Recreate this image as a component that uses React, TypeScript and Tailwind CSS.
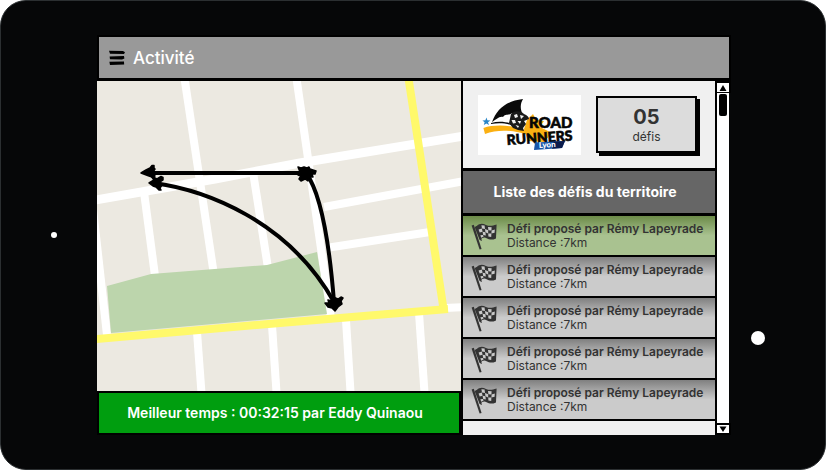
const challenges = [
  { id: 1, author: "Rémy Lapeyrade", distance: "7km", active: true },
  { id: 2, author: "Rémy Lapeyrade", distance: "7km", active: false },
  { id: 3, author: "Rémy Lapeyrade", distance: "7km", active: false },
  { id: 4, author: "Rémy Lapeyrade", distance: "7km", active: false },
  { id: 5, author: "Rémy Lapeyrade", distance: "7km", active: false },
];

function MenuIcon() {
  return (
    <svg className="h-4 w-4" viewBox="0 0 16 16" fill="#000" aria-hidden="true">
      <path d="M0 .8 L14 1 L16 2.2 L15 4 L1 3.8 Z" />
      <path d="M.6 6.4 L15 6 L15.4 8.6 L13 9.4 L1 9.2 Z" />
      <path d="M.4 11.8 L15 11.6 L15.2 14.6 L1 15 Z" />
    </svg>
  );
}

function FlagIcon() {
  return (
    <svg className="h-7 w-7 shrink-0" viewBox="0 0 28 28" aria-hidden="true">
      <path d="M.6 3.6 L2.8 2.8 L10.6 27 L8.6 27.6 Z" fill="#333" />
      <path d="M3.6 5 L6.2 3.8 L11 19 L8.6 18 Z" fill="#333" />
      <path
        d="M5.4 4.4 C9 .8 12 1.6 15 3 C18.4 4.4 21 4 25.6 2.6 L25 16.4 C21 18.4 18 17.6 15.6 16.2 C13 14.8 11 16 9.6 17.6 Z"
        fill="#333"
      />
      <g fill="#c9c9c9">
        <path d="M10.4 3.2 L13.6 3.6 L14 7 L11 6.4 Z" />
        <path d="M17 5 L20.6 5.2 L20.4 8.4 L17.4 8.2 Z" />
        <path d="M7.6 7.6 L10.8 6.6 L11.6 9.8 L8.6 10.6 Z" />
        <path d="M14 7 L17.2 8.2 L17.2 11.4 L14.4 10.2 Z" />
        <path d="M20.6 8.4 L23.8 7.6 L23.6 10.8 L20.4 11.6 Z" />
        <path d="M11.6 9.8 L14.4 10.2 L14.8 13.4 L12.2 13 Z" />
        <path d="M17.2 11.4 L20.4 11.6 L20.2 15 L17.4 14.6 Z" />
        <path d="M9.4 13.2 L12 13 L12.6 14.4 L10.2 15.8 Z" />
      </g>
    </svg>
  );
}

function ClubLogo() {
  return (
    <svg className="h-[60px] w-[103px] bg-white" viewBox="0 0 103 60" role="img" aria-label="Road Runners Lyon">
      <path d="M5.4 33 C14 30 26 30 38 32 L50 36 L50 40 C36 35 20 34 7 39 Z" fill="#fbb012" />
      <path d="M49 25 L55 19 L58 25 L66 26 L62 32 L74 38 L66 47 L50 46 L46 34 Z" fill="#fbb012" />
      <path d="M8.4 22.4 L9.4 25.2 L12.4 25.4 L10 27.2 L11 30 L8.4 28.4 L5.8 30 L6.6 27.2 L4.4 25.4 L7.4 25.2 Z" fill="#2a86c8" />
      <path d="M14 27 C19 14 28 6 45 4 C42 9 42 14 45 20 C41 17 37 19 34 18 C31 21 28 18 25 22 C21 21 18 25 14 27 Z" fill="#0a0a0a" />
      <path d="M13 28 C20 26 27 26.500 33 28.500 L33 30 C26 28 20 28 13 29 Z" fill="#0a0a0a" />
      <path d="M33 19 C37 15 43 16 46 19 C49 20 51 22 51 24 L46 26 L48 29 L45 33 L46 36 L40 35 L35 33 L31 28 Z" fill="#1a1a1a" />
      <path d="M36 20 L39 19 L40 22 L37 23 Z M42 20 L46 21 L43 24 Z M33.500 25 L37 25 L38 28 L35 28.500 Z M39.500 26 L43 26 L42 29 Z M37.500 30 L41 31 L40 33 Z" fill="#f1f1f1" />
      <g fontFamily="Lato, 'Liberation Sans', sans-serif" fontWeight="900" fill="#050505" stroke="#050505" strokeWidth=".6">
        <text x="51" y="33" fontSize="15">ROAD</text>
        <text x="29" y="50" fontSize="14" transform="rotate(-4 29 50)">RUNNERS</text>
      </g>
      <path d="M57 47.500 L87 46 L84 53 L56 55 Z" fill="#1a57a8" />
      <path d="M76 46.500 L87 46 L84 53 L74 53.700 Z" fill="#0b1c4c" />
      <text x="61" y="53" fontSize="8" fontWeight="900" fontFamily="Lato, 'Liberation Sans', sans-serif" fill="#fff" transform="rotate(-3 61 53)">Lyon</text>
    </svg>
  );
}

function RouteMap() {
  return (
    <svg
      className="block h-full min-h-[310px] w-full"
      viewBox="97 81 364 310"
      preserveAspectRatio="xMidYMid slice"
      role="img"
      aria-label="Carte du parcours"
    >
      <rect x="-403" y="-419" width="1364" height="1310" fill="#ece9e1" />
      <g stroke="#fff" strokeWidth="8" fill="none">
        <path d="M184 75 L214 275" />
        <path d="M296 75 L331 318" />
        <path d="M144 192 L155 276" />
        <path d="M253 172 L268 268" />
        <path d="M92 200 L107 335" />
        <path d="M197 332 L202 400" />
        <path d="M272 325 L277 400" />
        <path d="M346 320 L351 400" />
        <path d="M419 313 L425 400" />
        <path d="M90 201 L215 179 L300 163 L470 135" strokeWidth="9" />
        <path d="M324 207 L470 180" />
        <path d="M326 248 L430 232" />
        <path d="M445 308 L470 307" />
      </g>
      <path d="M107 286 L151 274 L267 265 L317 252 L327 314 L111 333 Z" fill="#bcd5ac" />
      <g stroke="#fff96b" strokeWidth="8" fill="none">
        <path d="M408 75 L444 312" />
        <path d="M90 339.500 L280 323 L448 309" />
      </g>
      <g stroke="#000" strokeWidth="4" fill="none">
        <path d="M146 173 L306 173" />
        <path d="M306 173 Q326 200 334 302" />
        <path d="M154 183 C205 190 288 220 334 302" />
      </g>
      <g fill="#000" stroke="#000" strokeWidth="1.500" strokeLinejoin="round">
        <path d="M141 173 L146 170 L150 168 L152 165.500 L154 165.500 L154 168 L155 169 L153 172 L155 176 L152 177 L149 176 Z" />
        <path d="M149 183 L154 180 L151 176 L157 179 L161 176.500 L163 177.500 L163 180 L160 182 L162 185 L160 188 L161 190 L159 190 L156 187 L153 186 Z" />
        <path d="M298 167 L301 168 L304 167 L307 168 L309 167 L310 169 L313 170 L316 171 L315 174 L312 174 L313 177 L310 177 L308 181 L305 179 L301 181 L299 179 L301 176 L298 175 L300 172 Z" />
        <path d="M335 311 L332 308 L328 307 L325 303 L329 303 L328 300 L332 301 L333 297 L338 299 L341 297 L343 298 L341 301 L342 304 L338 307 Z" />
      </g>
    </svg>
  );
}

function ScrollBar() {
  return (
    <div className="flex w-4 shrink-0 flex-col border-l-2 border-black bg-white">
      <button type="button" aria-label="Défiler vers le haut" className="flex h-3 items-center justify-center border-b border-r-2 border-t-2 border-black">
        <svg className="h-2 w-2" viewBox="0 0 8 8" aria-hidden="true">
          <path d="M4 1 L7.500 7 L.5 7 Z" />
        </svg>
      </button>
      <div className="flex flex-1 justify-center border-r-2 border-[#060708] pt-px">
        <div className="h-[22px] w-2 rounded-xs bg-black" />
      </div>
      <button type="button" aria-label="Défiler vers le bas" className="flex h-3 items-center justify-center border-2 border-l-0 border-black">
        <svg className="h-2 w-2" viewBox="0 0 8 8" aria-hidden="true">
          <path d="M4 7 L7.500 1.500 L.5 1.500 Z" />
        </svg>
      </button>
    </div>
  );
}

export default function App() {
  return (
    <div className="min-h-screen bg-white font-['Inter','Liberation_Sans',sans-serif]">
      <div className="flex min-h-screen rounded-[26px] border border-[#2b2f31] bg-[#060708] py-[34px]">
        <div className="flex w-24 shrink-0 items-center justify-center pl-2.5">
          <span className="h-1.5 w-1.5 rounded-full bg-white" />
        </div>

        <div className="flex min-w-0 flex-1 flex-col">
          <header className="flex h-[46px] shrink-0 items-center gap-2 border-2 border-b-3 border-black bg-[#999] pl-2.5">
            <button type="button" aria-label="Menu">
              <MenuIcon />
            </button>
            <h1 className="text-[17px] leading-6 font-medium text-white">Activité</h1>
          </header>

          <div className="flex min-h-0 flex-1">
            <main className="flex min-w-0 flex-1 flex-col">
              <div className="min-h-0 flex-1 overflow-hidden">
                <RouteMap />
              </div>
              <p className="flex h-11 shrink-0 items-center justify-center border-2 border-black bg-[#009e0f] pr-2 text-[14px] leading-4 font-semibold text-white">
                Meilleur temps : 00:32:15 par Eddy Quinaou
              </p>
            </main>

            <aside className="flex w-[270px] shrink-0 border-l-2 border-black">
              <div className="min-w-0 flex-1 bg-[#f0f0f0]">
                <div className="flex h-[87px] items-center justify-between pl-[15px] pr-[18px]">
                  <ClubLogo />
                  <div className="flex h-[57px] w-[101px] flex-col items-center justify-center border-2 border-black bg-[#dcdcdc] text-[#333] shadow-[3px_3px_0_#000]">
                    <strong className="text-[20px] leading-6">05</strong>
                    <span className="text-[12px] leading-4">défis</span>
                  </div>
                </div>
                <h2 className="flex h-12 items-center justify-center border-y-3 border-black bg-[#666] pr-2 text-[14px] leading-4 font-bold text-white">
                  Liste des défis du territoire
                </h2>
                <ul>
                  {challenges.map((c) => (
                    <li key={c.id}>
                      <button
                        type="button"
                        className={
                          "flex h-[41px] w-full items-center gap-2 border-b-2 border-black bg-linear-to-b pl-2 text-left text-[#333] " +
                          (c.active
                            ? "from-[#6c8b48] via-[#a9c290] via-50% to-[#a9c290]"
                            : "from-[#808080] via-[#cbcbcb] via-50% to-[#cbcbcb]")
                        }
                      >
                        <FlagIcon />
                        <span className="flex flex-col whitespace-nowrap text-[12px] leading-[14px]">
                          <strong className="font-semibold">Défi proposé par {c.author}</strong>
                          <span>Distance :{c.distance}</span>
                        </span>
                      </button>
                    </li>
                  ))}
                </ul>
              </div>
              <ScrollBar />
            </aside>
          </div>
        </div>

        <div className="flex w-[94px] shrink-0 items-end pb-[90px] pl-5">
          <span className="h-3.5 w-3.5 rounded-full bg-white" />
        </div>
      </div>
    </div>
  );
}
